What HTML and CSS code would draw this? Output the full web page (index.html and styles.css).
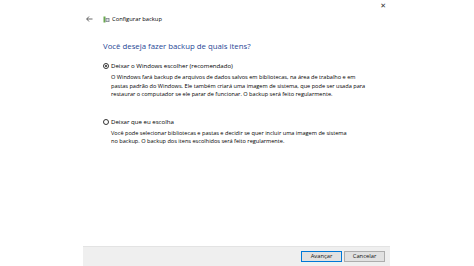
FILE: index.html
```html
<!DOCTYPE html>
<html lang="pt-BR">
<head>
<meta charset="utf-8">
<link rel="stylesheet" href="styles.css">
</head>
<body>
<div class="window">
  <div class="chrome">
    <span class="close">✕</span>
  </div>
  <div class="nav">
    <svg class="back" width="7" height="6" viewBox="0 0 7 6"><path d="M3 0.5 L0.7 3 L3 5.5 M0.7 3 H6.5" fill="none" stroke="#444" stroke-width="0.8"/></svg>
    <svg class="appicon" width="7" height="7" viewBox="0 0 7 7">
      <rect x="0.5" y="0.5" width="2" height="6" fill="#6aa84f"/>
      <rect x="2.5" y="2" width="4" height="4" rx="0.5" fill="#8a8f99"/>
      <circle cx="4.5" cy="4" r="1.2" fill="#d9dde4"/>
    </svg>
    <span class="navtitle">Configurar backup</span>
  </div>
  <div class="content">
    <h1 class="instruction">Você deseja fazer backup de quais itens?</h1>
    <div class="option">
      <div class="optlabel"><span class="radio checked"></span>Deixar o Windows escolher (recomendado)</div>
      <p class="desc">O Windows fará backup de arquivos de dados salvos em bibliotecas, na área de trabalho e em<br>pastas padrão do Windows. Ele também criará uma imagem de sistema, que pode ser usada para<br>restaurar o computador se ele parar de funcionar. O backup será feito regularmente.</p>
    </div>
    <div class="option second">
      <div class="optlabel"><span class="radio"></span>Deixar que eu escolha</div>
      <p class="desc">Você pode selecionar bibliotecas e pastas e decidir se quer incluir uma imagem de sistema<br>no backup. O backup dos itens escolhidos será feito regularmente.</p>
    </div>
  </div>
  <div class="footer">
    <button class="btn primary">Avançar</button>
    <button class="btn">Cancelar</button>
  </div>
</div>
</body>
</html>
```
FILE: styles.css
```css
html, body {
  margin: 0;
  padding: 0;
  background: #ffffff;
  height: 100%;
}
body {
  font-family: "Open Sans", "Noto Sans", sans-serif;
  color: #111;
  overflow: hidden;
}
.window {
  margin-left: 83px;
  width: 307px;
  height: 266px;
  display: flex;
  flex-direction: column;
}
.chrome {
  height: 12px;
  display: flex;
  justify-content: flex-end;
  align-items: center;
  padding-right: 4px;
}
.close {
  font-size: 7px;
  color: #333;
  line-height: 1;
  font-family: "DejaVu Sans", sans-serif;
}
.nav {
  display: flex;
  align-items: center;
  height: 14px;
  padding-left: 3px;
}
.back {
  margin-right: 10px;
}
.appicon {
  margin-right: 2px;
}
.navtitle {
  font-size: 5.8px;
  color: #000;
}
.content {
  padding-left: 20px;
  flex: 1;
}
.instruction {
  margin: 14px 0 0 0;
  font-size: 7.8px;
  font-weight: normal;
  color: #1f4796;
  line-height: 12px;
}
.option {
  margin-top: 10px;
}
.option.second {
  margin-top: 19px;
}
.optlabel {
  display: flex;
  align-items: center;
  font-size: 6.1px;
  line-height: 8px;
  color: #000;
}
.radio {
  width: 4px;
  height: 4px;
  border: 0.8px solid #333;
  border-radius: 50%;
  margin-right: 2px;
  position: relative;
  box-sizing: content-box;
}
.radio.checked::after {
  content: "";
  position: absolute;
  left: 1px;
  top: 1px;
  width: 2px;
  height: 2px;
  border-radius: 50%;
  background: #222;
}
.desc {
  margin: 3px 0 0 8px;
  font-size: 5.6px;
  line-height: 8.5px;
  white-space: nowrap;
  color: #000;
}
.footer {
  height: 19px;
  background: #efefef;
  border-top: 1px solid #e3e3e3;
  display: flex;
  justify-content: flex-end;
  align-items: center;
  gap: 2px;
  padding-right: 5px;
}
.btn {
  width: 41px;
  height: 11px;
  padding: 0;
  font-family: inherit;
  font-size: 5.8px;
  line-height: 9px;
  background: #e1e1e1;
  border: 1px solid #adadad;
  color: #111;
}
.btn.primary {
  border-color: #0078d7;
}
```
